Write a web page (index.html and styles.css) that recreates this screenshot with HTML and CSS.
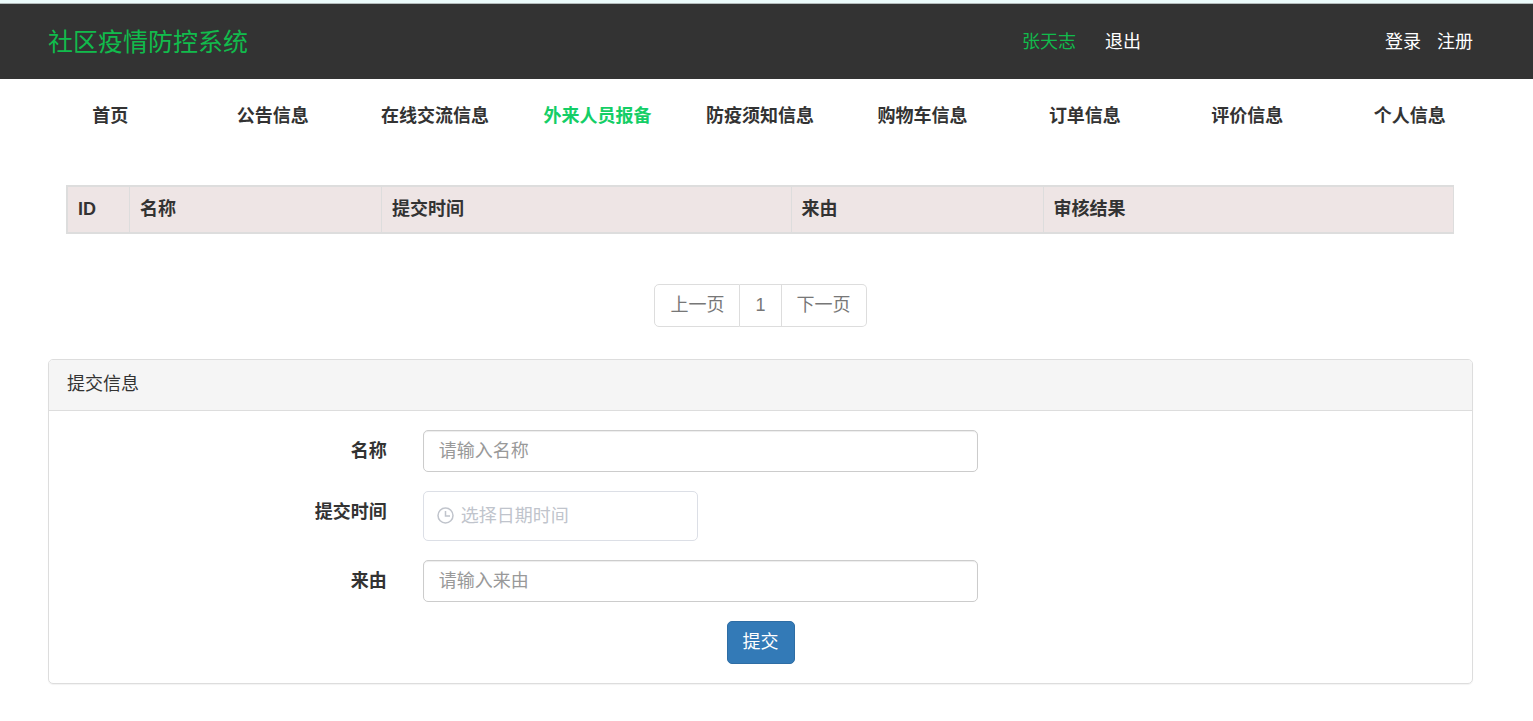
FILE: index.html
```html
<!DOCTYPE html>
<html lang="zh-CN">
<head>
<meta charset="utf-8">
<title>社区疫情防控系统</title>
<link rel="stylesheet" href="styles.css">
</head>
<body>
<header class="topbar">
  <a class="brand" href="#">社区疫情防控系统</a>
  <div class="account">
    <div class="user">
      <a class="user-name" href="#">张天志</a>
      <a href="#">退出</a>
    </div>
    <div class="auth">
      <a href="#">登录</a>
      <a href="#">注册</a>
    </div>
  </div>
</header>
<nav class="menu">
  <a href="#">首页</a>
  <a href="#">公告信息</a>
  <a href="#">在线交流信息</a>
  <a class="active" href="#">外来人员报备</a>
  <a href="#">防疫须知信息</a>
  <a href="#">购物车信息</a>
  <a href="#">订单信息</a>
  <a href="#">评价信息</a>
  <a href="#">个人信息</a>
</nav>
<main class="content">
  <div class="table-wrap">
    <table class="records">
      <thead>
        <tr>
          <th class="col-id" scope="col">ID</th>
          <th class="col-short" scope="col">名称</th>
          <th scope="col">提交时间</th>
          <th class="col-short" scope="col">来由</th>
          <th scope="col">审核结果</th>
        </tr>
      </thead>
    </table>
  </div>
  <div class="pagination">
    <a href="#">上一页</a>
    <a href="#">1</a>
    <a href="#">下一页</a>
  </div>
  <section class="panel">
    <h2 class="panel-heading">提交信息</h2>
    <form class="panel-body">
      <div class="form-row">
        <label for="name">名称</label>
        <div class="field"><input class="text-input" id="name" type="text" placeholder="请输入名称"></div>
      </div>
      <div class="form-row">
        <label for="time">提交时间</label>
        <div class="field">
          <div class="date-box">
            <svg class="clock" viewBox="0 0 18 18" aria-hidden="true"><circle cx="8.5" cy="8.5" r="7.5"/><path d="M8.5 4V9H13"/></svg>
            <input class="date-input" id="time" type="text" placeholder="选择日期时间">
          </div>
        </div>
      </div>
      <div class="form-row">
        <label for="reason">来由</label>
        <div class="field"><input class="text-input" id="reason" type="text" placeholder="请输入来由"></div>
      </div>
      <button class="submit" type="submit">提交</button>
    </form>
  </section>
</main>
</body>
</html>
```
FILE: styles.css
```css
* {
  box-sizing: border-box;
}

body {
  margin: 0;
  border-top: 3px solid #ebfbfb;
  background: #fff;
  color: #333;
  font-family: "Liberation Sans", "Noto Sans CJK SC", sans-serif;
  font-size: 18px;
  line-height: 25px;
}

a {
  color: inherit;
  text-decoration: none;
}

input,
button {
  font: inherit;
}

.topbar {
  display: grid;
  grid-template-columns: 2fr 1fr;
  align-items: center;
  border-top: 1px solid #b4bcbc;
  padding: 20px 60px 19px 48px;
  background: #333;
  color: #fff;
}

.brand {
  color: #11bb4c;
  font-size: 25px;
  line-height: 36px;
}

.account {
  display: flex;
  justify-content: space-between;
  padding-left: 24px;
}

.user {
  display: flex;
  gap: 29px;
}

.user-name {
  color: #11bb4c;
}

.auth {
  display: flex;
  gap: 16px;
}

.menu {
  display: grid;
  grid-template-columns: repeat(9, 1fr);
  padding: 25px 42px 23px 29px;
  font-weight: bold;
  text-align: center;
}

.menu .active {
  color: #14ce66;
}

.content {
  padding: 33px 60px 37px 48px;
}

.table-wrap {
  padding: 0 19px 0 18px;
}

.records {
  width: 100%;
  table-layout: fixed;
  border: 1px solid #ddd;
  border-spacing: 0;
  background: #eee5e5;
}

.records th {
  border: 1px solid #ddd;
  border-left-width: 0;
  padding: 10px;
  text-align: left;
}

.records th:first-child {
  border-left-width: 1px;
}

.records th:last-child {
  border-right-width: 0;
}

.records .col-id {
  width: 63px;
}

.records .col-short {
  width: 252px;
}

.pagination {
  display: flex;
  justify-content: center;
  margin: 50px 0 32px;
  color: #777;
}

.pagination a {
  border: 1px solid #ddd;
  border-left-width: 0;
  padding: 8px 15px;
}

.pagination a:first-child {
  border-left-width: 1px;
  border-radius: 5px 0 0 5px;
}

.pagination a:last-child {
  border-radius: 0 5px 5px 0;
}

.panel {
  border: 1px solid #ddd;
  border-radius: 5px;
  box-shadow: 0 1px 1px rgba(0, 0, 0, 0.05);
}

.panel-heading {
  margin: 0;
  border-bottom: 1px solid #ddd;
  border-radius: 4px 4px 0 0;
  padding: 12px 18px 13px;
  background: #f5f5f5;
  font-size: 18px;
  font-weight: normal;
}

.panel-body {
  display: grid;
  gap: 19px;
  padding: 19px 0;
}

.form-row {
  display: grid;
  grid-template-columns: 3fr 5fr 4fr;
}

.form-row label {
  padding: 9px 18px 0;
  font-weight: bold;
  text-align: right;
}

.field {
  padding: 0 20px 0 18px;
}

.text-input {
  display: block;
  width: 100%;
  height: 42px;
  border: 1px solid #ccc;
  border-radius: 5px;
  padding: 0 15px;
  background: #fff;
  box-shadow: inset 0 1px 1px rgba(0, 0, 0, 0.075);
  color: #555;
}

.text-input::placeholder {
  color: #999;
}

.date-box {
  display: flex;
  align-items: center;
  gap: 6px;
  width: 275px;
  height: 50px;
  border: 1px solid #dcdfe6;
  border-radius: 5px;
  padding: 0 13px;
}

.clock {
  flex: none;
  width: 18px;
  height: 18px;
  fill: none;
  stroke: #c0c4cc;
  stroke-width: 1.5;
}

.date-input {
  flex: 1;
  min-width: 0;
  border: 0;
  padding: 0;
  background: none;
  color: #606266;
}

.date-input::placeholder {
  color: #c0c4cc;
}

.submit {
  justify-self: center;
  border: 1px solid #2e6da4;
  border-radius: 5px;
  padding: 8px 15px;
  background: #337ab7;
  color: #fff;
}
```
